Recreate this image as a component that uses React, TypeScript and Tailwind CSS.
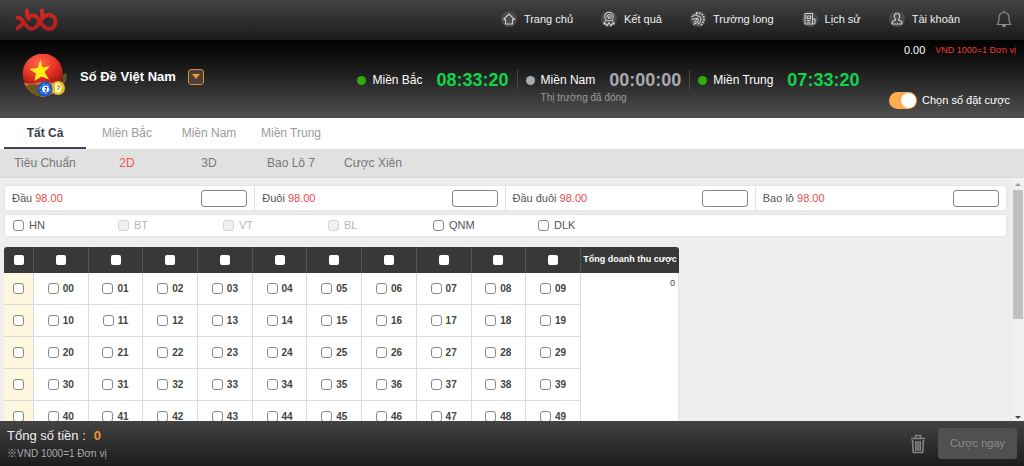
import { useState, type ReactNode } from "react";

function Logo() {
  return (
    <svg viewBox="0 0 44 26" className="h-[26px] w-11" fill="none" strokeLinecap="round" strokeLinejoin="round" aria-label="xbb" role="img">
      <defs>
        <linearGradient id="logoRed" x1="0" y1="0" x2="0" y2="26" gradientUnits="userSpaceOnUse">
          <stop offset="0" stopColor="#e0281f" />
          <stop offset="1" stopColor="#a81e20" />
        </linearGradient>
      </defs>
      <g stroke="url(#logoRed)" strokeWidth="3.800">
        <path d="M2.500 10.500C5.500 10.500 6.500 12.500 8.500 15L12 19.500C14.500 22.500 18.500 22.500 21 20L27.500 11.500C30.500 7 36.500 6.500 39.500 11C42.500 16.500 38.500 22.300 33.500 22C30.500 21.500 29 20 27.500 18L23 11.500C21 8 16 7 13.500 10.500" />
        <path d="M2.500 21.500L7.500 17" />
        <path d="M12 3.500V9L14 12" />
        <path d="M27 3.500V10" />
      </g>
    </svg>
  );
}

function GameBall() {
  return (
    <svg viewBox="0 0 46 46" className="h-[46px] w-[46px]" aria-hidden="true">
      <defs>
        <radialGradient id="ballRed" cx=".4" cy=".3" r=".75">
          <stop offset="0" stopColor="#ff6652" />
          <stop offset=".55" stopColor="#e93428" />
          <stop offset="1" stopColor="#a31714" />
        </radialGradient>
      </defs>
      <path d="M36 25L44 19C46 25 43 31 38 33Z" fill="#5d5630" />
      <circle cx="21" cy="23" r="20" fill="#3d2a18" />
      <path d="M2 29Q18 20 37 31Q32 43 20 43Q7 41 2 29Z" fill="#d9772f" />
      <path d="M4 32Q13 27 22 34L19 43Q8 40 4 32Z" fill="#6f5426" />
      <path d="M1 23A20 20 0 1 1 37 31Q28 27 18 28Q8 31 3 29Q1 26 1 23Z" fill="url(#ballRed)" />
      <path d="M18.500 5.500L20.500 13.500L28 12L22.500 18L27 25.500L19.500 22.500L12.500 27L14 19.500L7 15L15.500 14Z" fill="#ffed16" />
      <circle cx="36" cy="34" r="7" fill="#e8bd21" />
      <path d="M33 30Q36 27 39 31Q41 35 37 39L33 38Z" fill="#fff6c5" />
      <path d="M35 32H38L36 36" fill="none" stroke="#a77c12" />
      <circle cx="23" cy="35" r="7.500" fill="#1756c6" />
      <circle cx="23" cy="35" r="5" fill="none" stroke="#8eb7f6" strokeDasharray="3 2" />
      <circle cx="23.500" cy="35" r="3.500" fill="#f4f8ff" />
      <path d="M22.500 33.500H25L23 37H25" fill="none" stroke="#1a4db1" />
    </svg>
  );
}

const navIcons: Record<string, ReactNode> = {
  home: <path d="M2.500 8.500L8 3L13.500 8.500H11.500V13H4.500V8.500H2.500" />,
  medal: (
    <>
      <circle cx="8" cy="5.500" r="4.300" />
      <path d="M6 6.500Q6 3.500 8.500 3.500Q10.500 4 10 6Q9 8 7.500 7Q7 5.500 8.500 5.500" />
      <path d="M4.800 9.500L2.500 13L5 12.800L6 15L8 11.500L10 15L11 12.800L13.500 13L11.200 9.500" />
    </>
  ),
  dragon: (
    <>
      <path d="M1.500 6L5.500 3.500L8 5Q11.500 5.500 11 9Q10.500 12 7.500 13.500" />
      <path d="M2 8.500L8 7L4 11.500M9 8L7.500 11L3.500 13.500" />
      <path d="M6 2Q14.500 1.500 13.800 9Q13 13 10 14.500" strokeWidth="2" strokeDasharray="1.600 1.200" />
    </>
  ),
  history: (
    <>
      <path d="M3 2.500H10.500V13H3ZM10.500 8H13V11.500Q13 13 11.500 13H9.500" />
      <path d="M5 5H8.500V7.500H5ZM5 9.500H8.500M5 11.300H8.500" />
    </>
  ),
  account: <path d="M8 2.500C5.800 2.500 5 4.300 5.400 6C5.700 7.500 6.700 8 6.500 9L3.500 10.500L2.800 13H13.200L12.500 10.500L9.500 9C9.300 8 10.300 7.500 10.600 6C11 4.300 10.200 2.500 8 2.500Z" />,
};

const navItems = [
  { icon: "home", label: "Trang chủ" },
  { icon: "medal", label: "Kết quả" },
  { icon: "dragon", label: "Trường long" },
  { icon: "history", label: "Lịch sử" },
  { icon: "account", label: "Tài khoản" },
];

function TopBar() {
  return (
    <header className="flex h-10 shrink-0 items-center justify-between bg-linear-to-b from-[#434343] to-[#1c1c1c] pr-3 pl-[15px]">
      <a href="#home"><Logo /></a>
      <nav className="flex items-center gap-7 pb-0.5 text-[11px] text-[#f0f0f0]">
        {navItems.map((item) => (
          <a key={item.label} href={"#" + item.icon} className="flex items-center gap-[7px] whitespace-nowrap">
            <svg viewBox="0 0 16 16" className="h-4 w-4 rounded-full bg-[#4b4b4b]" fill="none" stroke="#cfcfcf" strokeWidth="1.100" strokeLinejoin="round" aria-hidden="true">
              {navIcons[item.icon]}
            </svg>
            {item.label}
          </a>
        ))}
        <button type="button" aria-label="Thông báo" className="ml-2">
          <svg viewBox="0 0 16 18" className="h-[18px] w-4" fill="none" stroke="#8d8d8d" strokeWidth="1.200" strokeLinecap="round" strokeLinejoin="round">
            <path d="M8 1V2.500M1 14.500H15M1.500 14C3 12.500 3 11 3 8C3 4.500 5 2.500 8 2.500C11 2.500 13 4.500 13 8C13 11 13 12.500 14.500 14" />
            <path d="M6.500 15.500Q8 18 9.500 15.500Z" fill="#8d8d8d" />
          </svg>
        </button>
      </nav>
    </header>
  );
}

const markets = [
  { name: "Miền Bắc", time: "08:33:20", open: true },
  { name: "Miền Nam", time: "00:00:00", open: false },
  { name: "Miền Trung", time: "07:33:20", open: true },
];

function Hero() {
  const [picking, setPicking] = useState(true);
  return (
    <section className="flex h-[78px] shrink-0 justify-between border-b border-[#484848] bg-linear-to-b from-[#030303] to-[#505050] text-white">
      <div className="flex items-center gap-3 pb-1 pl-[22px]">
        <GameBall />
        <h1 className="text-[13px] font-bold whitespace-nowrap">Số Đề Việt Nam</h1>
        <button type="button" aria-label="Chọn trò chơi" className="flex h-4 w-4 items-center justify-center rounded-[3px] border border-[#d98a3c] bg-[#4a4038]">
          <svg viewBox="0 0 8 5" className="h-[5px] w-2" fill="#f39a3b"><path d="M0 0H8L4 5Z" /></svg>
        </button>
      </div>
      <div className="flex items-start pt-7 pl-31">
        {markets.map((m, i) => (
          <div key={m.name} className="flex items-start">
            {i > 0 && <span className="mt-0.5 h-5 w-px bg-[#474747]" />}
            <div className="px-2">
              <div className="flex h-6 items-center whitespace-nowrap">
                <span className={m.open ? "mr-1.5 h-[9px] w-[9px] rounded-full bg-[#2fae0b]" : "mr-1.5 h-[9px] w-[9px] rounded-full bg-[#a8aab0]"} />
                <span className="mr-3.5 text-xs">{m.name}</span>
                <time className={m.open ? "text-lg font-bold text-[#10d54b]" : "text-lg font-bold text-[#a8aab0]"}>{m.time}</time>
              </div>
              {!m.open && <p className="pl-[15px] text-[10px] leading-[11px] text-[#9b9b9b]">Thị trường đã đóng</p>}
            </div>
          </div>
        ))}
      </div>
      <div className="flex flex-col justify-between pt-[3px] pr-2 pb-2">
        <div className="flex items-center justify-end gap-2.5 whitespace-nowrap">
          <span className="text-[11px] leading-[14px]">0.00</span>
          <span className="text-[9px] leading-[14px] text-[#ee3a33]">VND 1000=1 Đơn vị</span>
        </div>
        <label className="flex items-center justify-end gap-[5px] pr-1.5 text-[11px] whitespace-nowrap">
          <input type="checkbox" role="switch" checked={picking} onChange={(e) => setPicking(e.target.checked)} className="h-[17px] w-7 appearance-none rounded-full bg-[#999] p-px before:block before:h-[15px] before:w-[15px] before:rounded-full before:bg-white checked:bg-[#f9ad4f] checked:before:ml-[11px]" />
          Chọn số đặt cược
        </label>
      </div>
    </section>
  );
}

function Tabs() {
  const [region, setRegion] = useState("Tất Cả");
  const [kind, setKind] = useState("2D");
  return (
    <>
      <nav className="flex h-[31px] shrink-0 bg-white px-1 text-xs">
        {["Tất Cả", "Miền Bắc", "Miền Nam", "Miền Trung"].map((t) => (
          <button key={t} type="button" onClick={() => setRegion(t)} className={t === region ? "w-[82px] border-b-2 border-[#45425f] font-bold text-[#3c3b4d]" : "w-[82px] border-b-2 border-transparent text-[#9b9b9b]"}>
            {t}
          </button>
        ))}
      </nav>
      <nav className="flex h-[29px] shrink-0 border-b border-[#d9d9d9] bg-[#e1e1e1] px-1 text-xs">
        {["Tiêu Chuẩn", "2D", "3D", "Bao Lô 7", "Cược Xiên"].map((t) => (
          <button key={t} type="button" onClick={() => setKind(t)} className={t === kind ? "w-[82px] text-[#f05656]" : "w-[82px] text-[#777]"}>
            {t}
          </button>
        ))}
      </nav>
    </>
  );
}

const boxClass = "block h-[11px] w-[11px] shrink-0 appearance-none rounded-[3px] border border-[#8a8a8a] bg-white checked:bg-[#f9ad4f] disabled:border-[#d4d4d4] disabled:bg-[#f1f1f1]";
const headBoxClass = "mx-auto block h-2.5 w-2.5 appearance-none rounded-[2px] bg-white checked:bg-[#f9ad4f]";
const digits = [0, 1, 2, 3, 4, 5, 6, 7, 8, 9];

function BetOptions() {
  return (
    <>
      <div className="grid grid-cols-4 rounded-[3px] border border-[#e5e5e5] bg-white">
        {["Đầu", "Đuôi", "Đầu đuôi", "Bao lô"].map((name) => (
          <label key={name} className="flex h-6 items-center justify-between border-r border-[#e5e5e5] px-[7px] text-[11px] text-[#555] last:border-r-0">
            <span>{name} <span className="text-[#e94b4b]">98.00</span></span>
            <input type="text" className="h-[17px] w-[46px] rounded-[3px] border border-[#888] bg-white px-1" />
          </label>
        ))}
      </div>
      <div className="mt-[3px] flex h-[23px] items-center rounded-[3px] border border-[#e5e5e5] bg-white px-2 text-[11px]">
        {["HN", "BT", "VT", "BL", "QNM", "DLK"].map((name) => {
          const off = name === "BT" || name === "VT" || name === "BL";
          return (
            <label key={name} className={off ? "flex w-[105px] items-center gap-[5px] text-[#b5b5b5]" : "flex w-[105px] items-center gap-[5px] text-[#555]"}>
              <input type="checkbox" disabled={off} className={boxClass} />
              {name}
            </label>
          );
        })}
      </div>
    </>
  );
}

function NumberTable() {
  return (
    <table className="mt-2.5 w-[675px] table-fixed border-separate border-spacing-0 overflow-hidden rounded-[3px] bg-white">
      <colgroup>
        <col className="w-[30px]" />
        {digits.map((d) => <col key={d} />)}
        <col className="w-[98px]" />
      </colgroup>
      <thead className="bg-[#383838] text-white">
        <tr className="h-[26px]">
          <th className="border-r border-[#555] p-0"><input type="checkbox" aria-label="Tất cả" className={headBoxClass} /></th>
          {digits.map((d) => (
            <th key={d} className="border-r border-[#555] p-0"><input type="checkbox" aria-label={"Cột " + d} className={headBoxClass} /></th>
          ))}
          <th className="p-0 text-[9px] font-bold whitespace-nowrap">Tổng doanh thu cược</th>
        </tr>
      </thead>
      <tbody className="text-[10px] leading-4 text-[#444]">
        {digits.map((row) => (
          <tr key={row} className="h-8">
            <td className="border-r border-b border-[#dadada] bg-[#fff6de] p-0">
              <input type="checkbox" aria-label={"Hàng " + row} className={boxClass + " mx-auto"} />
            </td>
            {digits.map((col) => (
              <td key={col} className="border-r border-b border-[#dadada] p-0">
                <label className="flex items-center justify-center gap-1 font-bold">
                  <input type="checkbox" className={boxClass} />
                  {row}{col}
                </label>
              </td>
            ))}
            {row === 0 && <td rowSpan={10} className="border-r border-[#e5e5e5] px-[3px] pt-1 text-right align-top text-[9px] leading-3">0</td>}
          </tr>
        ))}
      </tbody>
    </table>
  );
}

function ScrollTrack() {
  return (
    <div className="flex w-3 shrink-0 flex-col items-center bg-[#f1f1f1]" aria-hidden="true">
      <svg viewBox="0 0 12 12" className="h-3 w-3 shrink-0" fill="#999"><path d="M3 8L6 5L9 8Z" /></svg>
      <div className="h-[53%] w-2.5 bg-[#c1c1c1]" />
      <svg viewBox="0 0 12 12" className="mt-auto h-3 w-3" fill="#444"><path d="M3 7L6 10L9 7Z" /></svg>
    </div>
  );
}

function BottomBar() {
  return (
    <footer className="flex h-[45px] shrink-0 items-center justify-between bg-linear-to-b from-[#434343] to-[#1c1c1c] pr-[7px] pl-[7px]">
      <div>
        <p className="flex gap-2 text-[13px] leading-5 font-medium text-[#f0f0f0]">
          <span>Tổng số tiền :</span>
          <span className="font-bold text-[#f39132]">0</span>
        </p>
        <p className="text-[10px] leading-4 text-[#aaa]">※VND 1000=1 Đơn vị</p>
      </div>
      <div className="flex items-center gap-3">
        <button type="button" aria-label="Xóa">
          <svg viewBox="0 0 16 20" className="h-5 w-4" fill="none" stroke="#858585" strokeWidth="1.600" strokeLinejoin="round">
            <path d="M1 4.500H15M5.500 4V1.500H10.500V4M2.500 6L3.300 18.500H12.700L13.500 6M5.800 7V17M8 7V17M10.200 7V17" />
          </svg>
        </button>
        <button type="button" className="h-[31px] rounded-[3px] bg-[#505050] px-3 text-[11px] text-[#8d8d8d]">Cược ngay</button>
      </div>
    </footer>
  );
}

export default function App() {
  return (
    <div className="flex h-screen flex-col overflow-hidden bg-[#eee] font-['Liberation_Sans','Noto_Sans_CJK_JP',sans-serif]">
      <TopBar />
      <Hero />
      <Tabs />
      <div className="flex min-h-0 flex-1">
        <main className="min-w-0 flex-1 overflow-y-auto pt-[7px] pr-[5px] pl-1 [scrollbar-width:none]">
          <BetOptions />
          <NumberTable />
        </main>
        <ScrollTrack />
      </div>
      <BottomBar />
    </div>
  );
}
